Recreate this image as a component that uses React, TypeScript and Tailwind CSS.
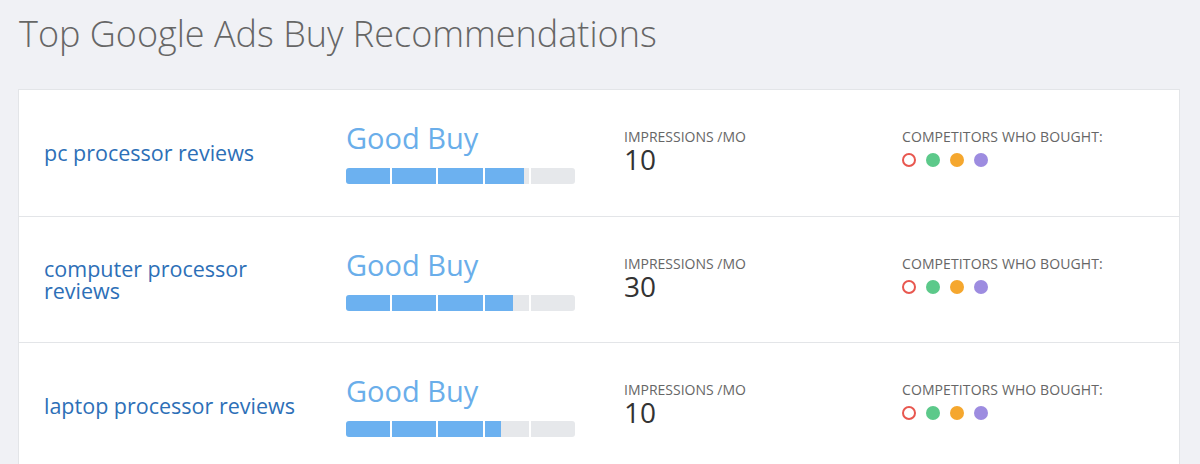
import React from 'react';

interface Recommendation {
  keyword: string;
  score: number;
  impressions: number;
}

const recommendations: Recommendation[] = [
  { keyword: 'pc processor reviews', score: 0.78, impressions: 10 },
  { keyword: 'computer processor reviews', score: 0.728, impressions: 30 },
  { keyword: 'laptop processor reviews', score: 0.672, impressions: 10 },
];

const ScoreBar: React.FC<{ score: number }> = ({ score }) => {
  const segments = [0, 1, 2, 3, 4];
  return (
    <div className="flex gap-[2px] w-[229px] h-4 rounded-[3px] overflow-hidden">
      {segments.map((i) => {
        const fill = Math.max(0, Math.min(1, score * 5 - i));
        return (
          <div key={i} className="flex-1 bg-[#e6e8eb]">
            <div className="h-full bg-[#6cb1f0]" style={{ width: `${fill * 100}%` }} />
          </div>
        );
      })}
    </div>
  );
};

const CompetitorDots: React.FC = () => (
  <div className="flex items-center gap-[10px] mt-2">
    <span className="w-[14px] h-[14px] rounded-full border-2 border-[#e8574f]" />
    <span className="w-[14px] h-[14px] rounded-full bg-[#5cc98a]" />
    <span className="w-[14px] h-[14px] rounded-full bg-[#f5a72e]" />
    <span className="w-[14px] h-[14px] rounded-full bg-[#9d8ce0]" />
  </div>
);

export default function App() {
  return (
    <div
      className="min-h-screen bg-[#f0f1f5] pt-[12px]"
      style={{ fontFamily: '"Open Sans", "Liberation Sans", sans-serif' }}
    >
      <h1 className="pl-[19px] text-[36px] leading-[44px] font-light text-[#666]">
        Top Google Ads Buy Recommendations
      </h1>

      <div className="mt-[33px] ml-[18px] w-[1162px] bg-white border border-[#e3e5e8]">
        {recommendations.map((rec, idx) => (
          <div
            key={rec.keyword}
            className={`flex h-[126px] ${idx > 0 ? 'border-t border-[#e3e5e8]' : ''}`}
          >
            {/* Keyword */}
            <div className="w-[327px] pl-[25px] pr-[40px] flex items-center">
              <a className="text-[21.5px] leading-[22px] text-[#2d6fb7]">{rec.keyword}</a>
            </div>

            {/* Score */}
            <div className="w-[278px] pt-[33px]">
              <div className="text-[29px] leading-[30px] text-[#6aaeea]">Good Buy</div>
              <div className="mt-[15px]">
                <ScoreBar score={rec.score} />
              </div>
            </div>

            {/* Impressions */}
            <div className="w-[278px] pt-[39px]">
              <div className="text-[14px] leading-4 uppercase text-[#666]">Impressions /Mo</div>
              <div className="text-[28px] leading-[28px] text-[#333]">{rec.impressions}</div>
            </div>

            {/* Competitors */}
            <div className="flex-1 pt-[39px]">
              <div className="text-[14px] leading-4 uppercase text-[#666] tracking-[0.1px]">
                Competitors Who Bought:
              </div>
              <CompetitorDots />
            </div>
          </div>
        ))}
      </div>
    </div>
  );
}
